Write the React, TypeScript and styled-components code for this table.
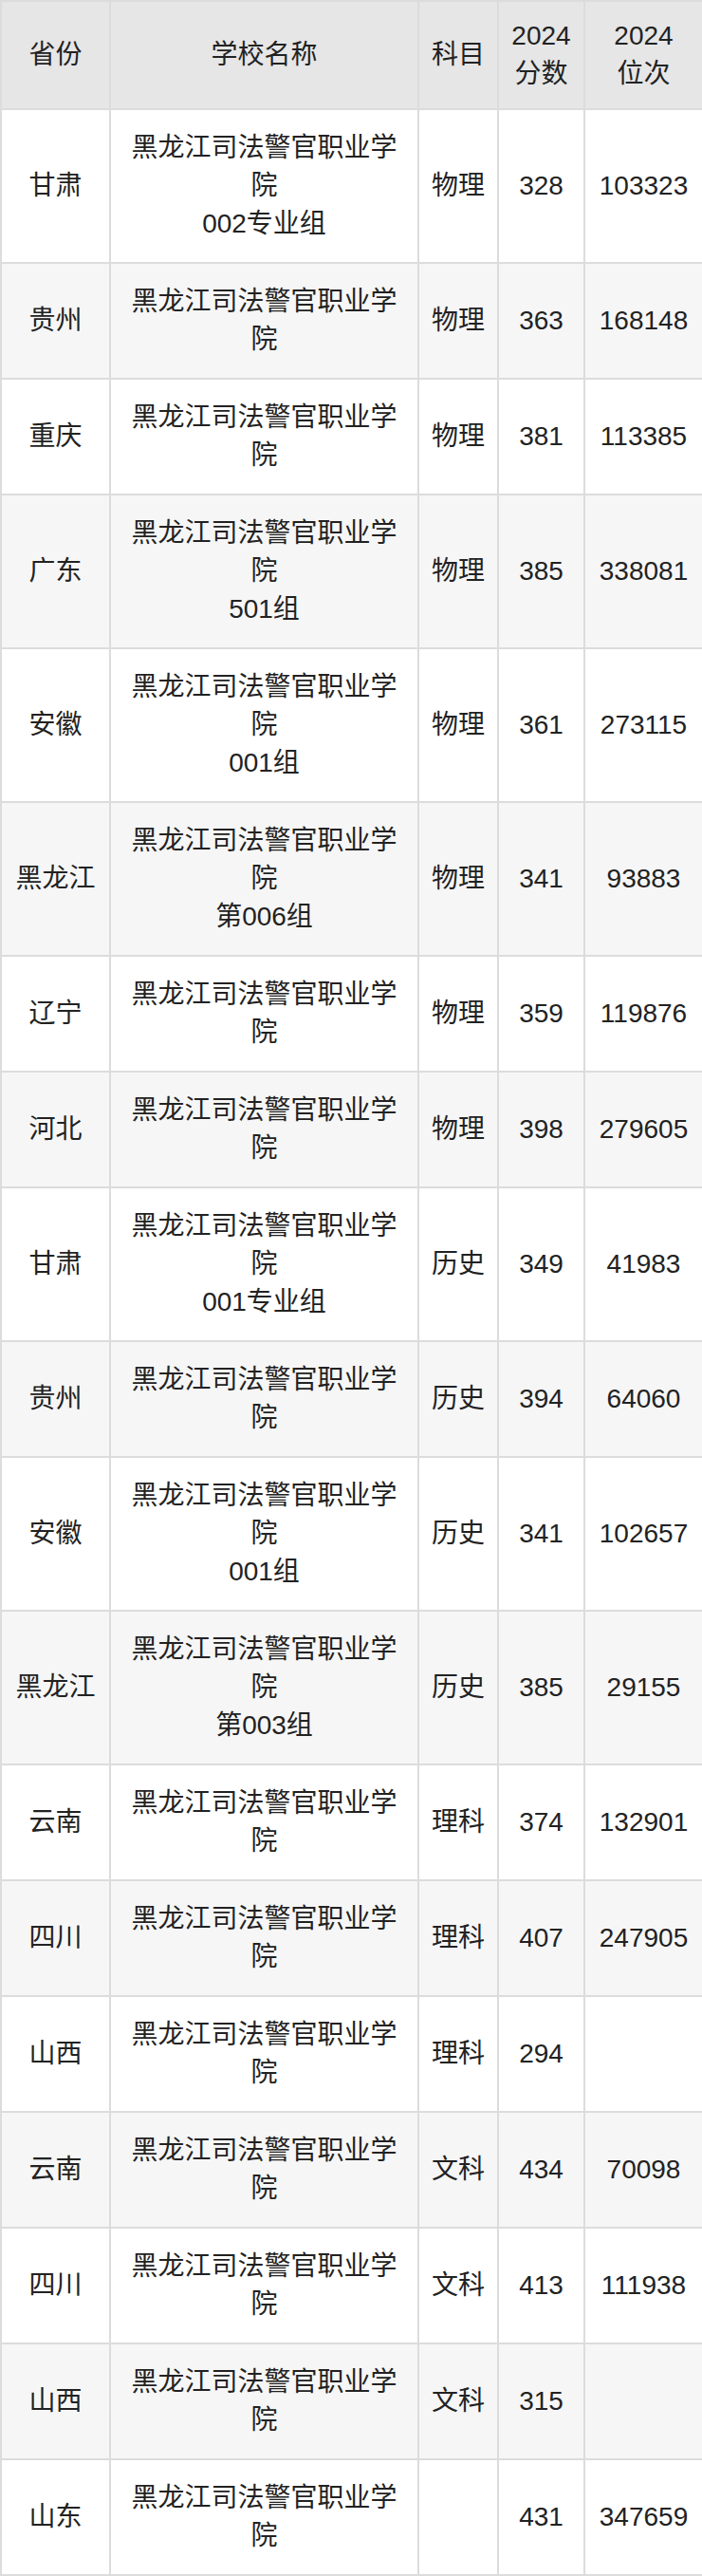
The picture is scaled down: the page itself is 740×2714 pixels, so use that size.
import * as React from 'react';
import styled, { createGlobalStyle } from 'styled-components';

const GlobalStyle = createGlobalStyle`
  html, body {
    margin: 0;
    padding: 0;
    background: #ffffff;
  }
`;

type Row = {
  province: string;
  school: string[];
  subject: string;
  score: string;
  rank: string;
};

const SCHOOL = '黑龙江司法警官职业学院';

const rows: Row[] = [
  { province: '甘肃', school: [SCHOOL, '002专业组'], subject: '物理', score: '328', rank: '103323' },
  { province: '贵州', school: [SCHOOL], subject: '物理', score: '363', rank: '168148' },
  { province: '重庆', school: [SCHOOL], subject: '物理', score: '381', rank: '113385' },
  { province: '广东', school: [SCHOOL, '501组'], subject: '物理', score: '385', rank: '338081' },
  { province: '安徽', school: [SCHOOL, '001组'], subject: '物理', score: '361', rank: '273115' },
  { province: '黑龙江', school: [SCHOOL, '第006组'], subject: '物理', score: '341', rank: '93883' },
  { province: '辽宁', school: [SCHOOL], subject: '物理', score: '359', rank: '119876' },
  { province: '河北', school: [SCHOOL], subject: '物理', score: '398', rank: '279605' },
  { province: '甘肃', school: [SCHOOL, '001专业组'], subject: '历史', score: '349', rank: '41983' },
  { province: '贵州', school: [SCHOOL], subject: '历史', score: '394', rank: '64060' },
  { province: '安徽', school: [SCHOOL, '001组'], subject: '历史', score: '341', rank: '102657' },
  { province: '黑龙江', school: [SCHOOL, '第003组'], subject: '历史', score: '385', rank: '29155' },
  { province: '云南', school: [SCHOOL], subject: '理科', score: '374', rank: '132901' },
  { province: '四川', school: [SCHOOL], subject: '理科', score: '407', rank: '247905' },
  { province: '山西', school: [SCHOOL], subject: '理科', score: '294', rank: '' },
  { province: '云南', school: [SCHOOL], subject: '文科', score: '434', rank: '70098' },
  { province: '四川', school: [SCHOOL], subject: '文科', score: '413', rank: '111938' },
  { province: '山西', school: [SCHOOL], subject: '文科', score: '315', rank: '' },
  { province: '山东', school: [SCHOOL], subject: '', score: '431', rank: '347659' },
];

const Table = styled.table`
  width: 740px;
  border-collapse: collapse;
  table-layout: fixed;
  font-family: "Liberation Sans", "Noto Sans CJK SC", sans-serif;
  font-size: 28px;
  line-height: 40px;
  color: #222222;
`;

const HeadCell = styled.th`
  background: #e6e6e6;
  border: 2px solid #dcdcdc;
  padding: 16px 10px;
  font-weight: normal;
  text-align: center;
  vertical-align: middle;
`;

const BodyRow = styled.tr<{ $striped: boolean }>`
  background: ${(p) => (p.$striped ? '#f6f6f6' : '#ffffff')};
`;

const Cell = styled.td`
  border: 2px solid #dcdcdc;
  padding: 20px 10px;
  text-align: center;
  vertical-align: middle;
  word-break: break-all;
`;

const Line = styled.div``;

export default function App() {
  return (
    <>
      <GlobalStyle />
      <Table>
        <colgroup>
          <col style={{ width: 115 }} />
          <col style={{ width: 325 }} />
          <col style={{ width: 84 }} />
          <col style={{ width: 91 }} />
          <col style={{ width: 125 }} />
        </colgroup>
        <thead>
          <tr>
            <HeadCell>省份</HeadCell>
            <HeadCell>学校名称</HeadCell>
            <HeadCell>科目</HeadCell>
            <HeadCell>2024<br />分数</HeadCell>
            <HeadCell>2024<br />位次</HeadCell>
          </tr>
        </thead>
        <tbody>
          {rows.map((r, i) => (
            <BodyRow key={i} $striped={i % 2 === 1}>
              <Cell>{r.province}</Cell>
              <Cell>
                {r.school.map((s, j) => (
                  <Line key={j}>{s}</Line>
                ))}
              </Cell>
              <Cell>{r.subject}</Cell>
              <Cell>{r.score}</Cell>
              <Cell>{r.rank}</Cell>
            </BodyRow>
          ))}
        </tbody>
      </Table>
    </>
  );
}
